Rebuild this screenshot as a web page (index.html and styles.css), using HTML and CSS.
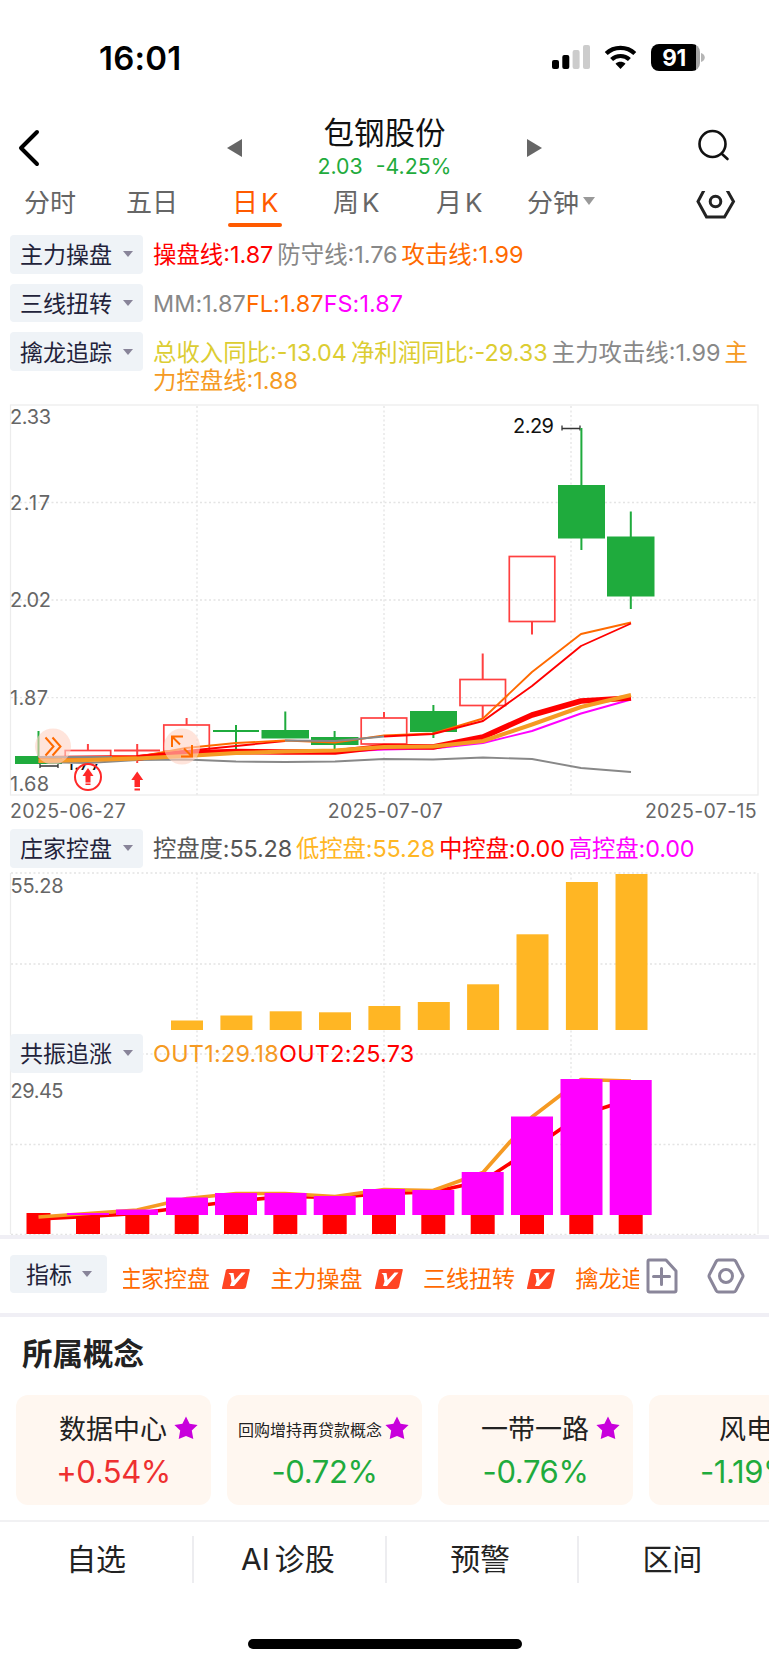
FILE: index.html
```html
<!DOCTYPE html>
<html lang="zh-CN">

<head>
    <meta charset="UTF-8">
    <meta name="viewport" content="width=device-width, initial-scale=1.0">
    <title>包钢股份</title>
    <link rel="stylesheet" href="styles.css">
</head>

<body>
    <div class="status-bar">
        <span class="status-time">16:01</span>
        <div class="status-icons">
            <svg class="icon-signal" width="38" height="24" viewBox="0 0 38 24">
                <rect x="0" y="15" width="7" height="9" rx="2" />
                <rect x="10.3" y="10" width="7" height="14" rx="2" />
                <rect class="dim" x="20.6" y="5" width="7" height="19" rx="2" />
                <rect class="dim" x="31" y="0" width="7" height="24" rx="2" />
            </svg>
            <svg class="icon-wifi" width="33" height="24" viewBox="0 0 33 24">
                <path d="M2.2 8.600C10 .9 23 .9 30.800 8.600" />
                <path d="M7.600 14.600c5-4.800 12.800-4.800 17.800 0" />
                <path class="dot" d="M11.500 18.700c3-2.600 7-2.600 10 0L16.500 24z" />
            </svg>
            <div class="battery"><span>91</span></div>
            <svg class="battery-nub" width="4" height="9" viewBox="0 0 4 9">
                <path d="M0 0c5 1.500 5 7.500 0 9z" />
            </svg>
        </div>
    </div>

    <header class="header">
        <svg class="icon-back" width="24" height="40" viewBox="0 0 24 40">
            <path d="M20 4L4 20l16 16" />
        </svg>
        <div class="stock">
            <svg width="15" height="18" viewBox="0 0 15 18"><path d="M15 0v18L0 9z" /></svg>
            <div class="stock-info">
                <h1 class="stock-name">包钢股份</h1>
                <p class="stock-price"><span>2.03</span><span>-4.25%</span></p>
            </div>
            <svg width="15" height="18" viewBox="0 0 15 18"><path d="M0 0v18l15-9z" /></svg>
        </div>
        <svg class="icon-search" width="34" height="34" viewBox="0 0 34 34">
            <circle cx="15.500" cy="15" r="13" />
            <path d="M25 25l5.500 5" />
        </svg>
    </header>

    <nav class="tabs">
        <span class="tab">分时</span>
        <span class="tab">五日</span>
        <span class="tab active">日<i>K</i></span>
        <span class="tab">周<i>K</i></span>
        <span class="tab">月<i>K</i></span>
        <span class="tab tab-more">分钟<svg width="12" height="8" viewBox="0 0 12 8"><path d="M0 0h12L6 8z" /></svg></span>
        <svg class="icon-hex" width="42" height="28" viewBox="0 0 42 28">
            <path d="M10.500-5.500h18l9 16-9 15.500h-18l-8.500-15.500z" />
            <circle cx="19.500" cy="10.500" r="5.300" />
        </svg>
    </nav>

    <section class="indicators">
        <div class="indicator">
            <button class="picker">主力操盘<i class="caret"></i></button>
            <p class="values"><span class="red">操盘线:1.87</span><span class="gray gap">防守线:1.76</span><span class="orange gap">攻击线:1.99</span></p>
        </div>
        <div class="indicator">
            <button class="picker">三线扭转<i class="caret"></i></button>
            <p class="values wide"><span class="gray">MM:1.87</span><span class="orange">FL:1.87</span><span class="magenta">FS:1.87</span></p>
        </div>
        <div class="indicator">
            <button class="picker">擒龙追踪<i class="caret"></i></button>
            <p class="values lines-two"><span class="yellow">总收入同比:-13.04</span><span class="yellow gap">净利润同比:-29.33</span><span class="gray gap">主力攻击线:1.99</span><span class="amber gap wrap">主力控盘线:1.88</span></p>
        </div>
    </section>

    <svg class="chart" width="769" height="392" viewBox="0 404 769 392">
        <g class="grid">
            <path d="M197 406v389M384 406v389M571 406v389" />
            <path d="M11 502.500h747M11 600h747M11 697.700h747" />
        </g>
        <rect class="frame" x="10.500" y="405" width="747.500" height="390" />

        <g class="label">
            <text x="10" y="423.500" textLength="41">2.33</text>
            <text x="10" y="509.500" textLength="40">2.17</text>
            <text x="10" y="607" textLength="41">2.02</text>
            <text x="10" y="704.500" textLength="38">1.87</text>
            <text x="10" y="790.500" textLength="39">1.68</text>
        </g>

        <!-- high / low marks -->
        <g class="mark">
            <text x="513" y="433" textLength="41">2.29</text>
            <path d="M562 428.500h18M562 425.500v5M580 425.500v5" />
            <text x="66" y="770" textLength="36">1.77</text>
            <path d="M40 766h18M40 764v4M58 764v4" />
        </g>
        <rect class="cover" x="64" y="751" width="48" height="13" />

        <!-- candles -->
        <g class="down">
            <path d="M38.500 731v26M236 725v24M285.300 711.500v20M334.600 731v18M433.400 705v33M581.400 428v122M630.800 511.500v97.500" />
            <rect x="15" y="756" width="47" height="8" />
            <rect x="213" y="730" width="46" height="2" />
            <rect x="261.500" y="730" width="47.500" height="8.500" />
            <rect x="311" y="737" width="47.500" height="8" />
            <rect x="410" y="711" width="47" height="21" />
            <rect x="558" y="485" width="47" height="53.500" />
            <rect x="607" y="536.500" width="47.500" height="60" />
        </g>
        <g class="up">
            <path d="M87.900 744v6M137.200 744v19M114 750.500h46M186.600 718v7M384 712v6M482.700 653.500v26M482.700 706v13M532 621.500v13" />
            <rect x="65.200" y="750.500" width="45.500" height="8" />
            <rect x="163.800" y="725" width="45.500" height="26" />
            <rect x="361.200" y="718" width="45.500" height="26" />
            <rect x="460" y="679.500" width="45.500" height="26" />
            <rect x="509.300" y="556.500" width="45.500" height="65" />
        </g>

        <g class="lines">
            <polyline stroke="#888" points="38.500,762 88,763 137,760 186,759.500 236,761.500 285,762 335,761.500 384,759 433,759.500 483,757.500 532,759 581,768 631,772" />
            <polyline stroke="#ff0000" points="38.500,757 137,756 186,751 236,746 285,741" />
            <polyline stroke="#ff6a00" points="38.500,758 137,757 186,748 236,743 285,740.500 335,742.500 384,735.500 433,733.500 483,718.500 532,672 581,634 631,622.500" />
            <polyline stroke="#888" points="38.500,757 112,757" />
            <polyline stroke="#888" points="285,740.500 335,741 384,736.500" />
            <polyline stroke="#ff0000" points="384,736.500 433,734 483,721 532,686 581,646 631,623.500" />
            <polyline stroke="#ff00ff" points="335,752 384,749.500 433,748.500 483,743 532,731 581,713.500 631,699.500" />
            <polyline class="thick" stroke="#ff0000" points="137,758 186,753 236,751.500 285,752 335,752 384,746.500 433,747 483,737 532,715 581,701 631,698" />
            <polyline class="mid" stroke="#f59a23" points="38.500,761 88,760 137,758.500 186,756 236,753 285,751.500 335,750.500 384,747 433,746.500 483,741 532,724.500 581,707 631,695" />
        </g>

        <!-- round buttons over the plot -->
        <circle class="bubble" cx="53" cy="746.500" r="18" />
        <path class="bubble-icon" d="M45.500 737.500l8 9-8 9M52.500 737.500l8 9-8 9" />
        <circle class="bubble" cx="182" cy="746.500" r="18" />
        <path class="bubble-icon" d="M172 747v-10.500h11M172 736.500l8 8M192 745v11.500h-11M192 756.500l-8-8" />

        <circle class="signal-ring" cx="88" cy="777" r="13" />
        <path class="signal-arrow" d="M88 768l5.500 8h-3v6.500h-5v-6.500h-3zM85.500 783.500h5v1.500h-5z" />
        <path class="signal-arrow" d="M137.200 771.500l6 8.500h-3.200v7h-5.500v-7h-3.200zM134.500 788.500h5.500v2h-5.500z" />
    </svg>

    <div class="dates">
        <span>2025-06-27</span>
        <span>2025-07-07</span>
        <span>2025-07-15</span>
    </div>

    <div class="indicator indicator-sub">
        <button class="picker">庄家控盘<i class="caret"></i></button>
        <p class="values tight"><span class="dark">控盘度:55.28</span><span class="gold gap">低控盘:55.28</span><span class="red gap">中控盘:0.00</span><span class="magenta gap">高控盘:0.00</span></p>
    </div>

    <section class="sub-charts">
        <svg class="chart" width="769" height="363" viewBox="0 872 769 363">
            <g class="grid">
                <path d="M197 873v361M384 873v361M571 873v361" />
                <path d="M11 873h747M11 964h747M11 1054h747M11 1144.500h747M11 1234.500h747" />
            </g>
            <path class="frame" d="M10.500 873v361M758 873v361" />
            <g class="label">
                <text x="10.500" y="892.500" textLength="53">55.28</text>
                <text x="10.500" y="1098" textLength="53">29.45</text>
            </g>

            <g class="gold-bars">
                <rect x="171" y="1020.500" width="32" height="9.500" />
                <rect x="220.400" y="1015.500" width="32" height="14.500" />
                <rect x="269.700" y="1011.300" width="32" height="18.700" />
                <rect x="319" y="1012.300" width="32" height="17.700" />
                <rect x="368.400" y="1006" width="32" height="24" />
                <rect x="417.800" y="1002" width="32" height="28" />
                <rect x="467.100" y="984.300" width="32" height="45.700" />
                <rect x="516.500" y="934.300" width="32" height="95.700" />
                <rect x="565.900" y="882" width="32" height="148" />
                <rect x="615.500" y="874" width="32" height="156" />
            </g>

            <g class="red-bars">
                <rect x="26.500" y="1213" width="24" height="21" />
                <rect x="76" y="1217" width="24" height="17" />
                <rect x="125.300" y="1215" width="24" height="19" />
                <rect x="174.700" y="1215" width="24" height="19" />
                <rect x="224" y="1215" width="24" height="19" />
                <rect x="273.300" y="1215" width="24" height="19" />
                <rect x="322.700" y="1215" width="24" height="19" />
                <rect x="372" y="1215" width="24" height="19" />
                <rect x="421.300" y="1215" width="24" height="19" />
                <rect x="470.700" y="1215" width="24" height="19" />
                <rect x="520" y="1215" width="24" height="19" />
                <rect x="569.300" y="1215" width="24" height="19" />
                <rect x="618.700" y="1215" width="24" height="19" />
            </g>
            <g class="lines out">
                <polyline stroke="#ff0000" points="38.500,1219 88,1216.500 137,1213.500 187,1207 236,1201 285,1196.500 335,1197.500 384,1193.500 433,1192 483,1181 532,1149 581,1115 631,1099" />
                <polyline stroke="#f59a23" points="38.500,1217 88,1213.500 137,1210 187,1198.500 236,1193.500 285,1193.500 335,1196.500 384,1189.500 433,1190.500 483,1172.500 532,1117 581,1079.500 631,1081" />
            </g>
            <g class="magenta-bars">
                <rect x="67" y="1213" width="42" height="2" />
                <rect x="116" y="1209.500" width="42" height="5.500" />
                <rect x="166" y="1197.500" width="42" height="17.500" />
                <rect x="215" y="1193" width="42" height="22" />
                <rect x="264.500" y="1193" width="42" height="22" />
                <rect x="313.700" y="1196" width="42" height="19" />
                <rect x="363" y="1189" width="42" height="26" />
                <rect x="412.300" y="1190" width="42" height="25" />
                <rect x="461.700" y="1172" width="42" height="43" />
                <rect x="511" y="1116.500" width="42" height="98.500" />
                <rect x="560.500" y="1079" width="42" height="136" />
                <rect x="609.700" y="1080" width="42" height="135" />
            </g>
        </svg>
        <div class="indicator indicator-over">
            <button class="picker">共振追涨<i class="caret"></i></button>
            <p class="values wider"><span class="amber">OUT1:29.18</span><span class="red">OUT2:25.73</span></p>
        </div>
    </section>

    <section class="toolbar">
        <button class="picker picker-small">指标<i class="caret"></i></button>
        <div class="quick-list">
            <span class="quick">庄家控盘<svg class="icon-v" width="28" height="20" viewBox="0 0 28 20"><path class="bg" d="M5.500 0H27q1 0 .8 1L24 18q-.5 2-3 2H1Q-.2 20 0 19L3.800 1.500Q4.200 0 5.500 0z" /><path class="v" d="M6.500 4h5l1.200 7L19.500 3.500h4L12 17H8l1.500-4.500L8.500 6z" /></svg></span>
            <span class="quick">主力操盘<svg class="icon-v" width="28" height="20" viewBox="0 0 28 20"><path class="bg" d="M5.500 0H27q1 0 .8 1L24 18q-.5 2-3 2H1Q-.2 20 0 19L3.800 1.500Q4.200 0 5.500 0z" /><path class="v" d="M6.500 4h5l1.200 7L19.500 3.500h4L12 17H8l1.500-4.500L8.500 6z" /></svg></span>
            <span class="quick">三线扭转<svg class="icon-v" width="28" height="20" viewBox="0 0 28 20"><path class="bg" d="M5.500 0H27q1 0 .8 1L24 18q-.5 2-3 2H1Q-.2 20 0 19L3.800 1.500Q4.200 0 5.500 0z" /><path class="v" d="M6.500 4h5l1.200 7L19.500 3.500h4L12 17H8l1.500-4.500L8.500 6z" /></svg></span>
            <span class="quick">擒龙追踪</span>
        </div>
        <svg class="icon-tool icon-add" width="32" height="36" viewBox="0 0 32 36">
            <path d="M3 2h17l10 11v19.500q0 1.500-1.500 1.500H3.500Q2 34 2 32.500v-29Q2 2 3 2z" />
            <path d="M15.500 10.500v16M7.500 18.500h16" />
        </svg>
        <svg class="icon-tool" width="38" height="36" viewBox="0 0 38 36">
            <path d="M11.500 2h15q1.500 0 2.200 1.200l7 13.600q.6 1.200 0 2.400l-7 13.600Q28 34 26.500 34h-15q-1.500 0-2.200-1.200l-7-13.600q-.6-1.200 0-2.400l7-13.600Q10 2 11.500 2z" />
            <circle cx="19" cy="18" r="6.500" />
        </svg>
    </section>

    <section class="concepts">
        <h2 class="concepts-title">所属概念</h2>
        <div class="cards">
            <div class="card">
                <div class="card-name">数据中心<svg class="star" width="24" height="24" viewBox="0 0 24 24"><path d="M12 .5l3.600 7.300 8 1.100-5.800 5.600 1.500 8.500L12 20l-7.300 3 1.500-8.500L.4 8.900l8-1.100z" /></svg></div>
                <div class="card-rate rise">+0.54%</div>
            </div>
            <div class="card">
                <div class="card-name long">回购增持再贷款概念<svg class="star" width="24" height="24" viewBox="0 0 24 24"><path d="M12 .5l3.600 7.300 8 1.100-5.800 5.600 1.500 8.500L12 20l-7.300 3 1.500-8.500L.4 8.900l8-1.100z" /></svg></div>
                <div class="card-rate fall">-0.72%</div>
            </div>
            <div class="card">
                <div class="card-name">一带一路<svg class="star" width="24" height="24" viewBox="0 0 24 24"><path d="M12 .5l3.600 7.300 8 1.100-5.800 5.600 1.500 8.500L12 20l-7.300 3 1.500-8.500L.4 8.900l8-1.100z" /></svg></div>
                <div class="card-rate fall">-0.76%</div>
            </div>
            <div class="card">
                <div class="card-name cut">风电</div>
                <div class="card-rate fall">-1.19%</div>
            </div>
        </div>
    </section>

    <nav class="bottom-nav">
        <a>自选</a>
        <a><span class="latin">AI</span>诊股</a>
        <a>预警</a>
        <a>区间</a>
    </nav>
    <div class="home-bar"></div>
</body>

</html>
```
FILE: styles.css
```css
* {
    box-sizing: border-box;
}

body {
    margin: 0;
    width: 769px;
    height: 1665px;
    overflow: hidden;
    background: #fff;
    color: #222;
    font-family: Inter, "Noto Sans CJK SC", sans-serif;
}

h1,
h2,
p {
    margin: 0;
    font-weight: 400;
}

i {
    font-style: normal;
}

svg {
    display: block;
    flex: none;
}

/* status bar */
.status-bar {
    display: flex;
    justify-content: space-between;
    align-items: center;
    height: 114px;
    padding: 0 64px 0 99px;
}

.status-time {
    padding-top: 2px;
    font-size: 33px;
    font-weight: 600;
    color: #000;
    letter-spacing: 0.2px;
}

.status-icons {
    display: flex;
    align-items: center;
}

.icon-signal {
    margin-right: -1px;
}

.icon-wifi {
    margin: 0 14px 0 15px;
    fill: none;
    stroke: #000;
    stroke-width: 4.2;
}

.icon-wifi .dot {
    fill: #000;
    stroke: none;
}

.icon-signal .dim {
    fill: #ccc;
}

.battery {
    width: 49px;
    height: 27px;
    padding-right: 3px;
    border-radius: 8px;
    background: linear-gradient(90deg, #000 92%, #a5a5a5 92%);
    color: #fff;
    font-size: 22.5px;
    font-weight: 700;
    line-height: 27px;
    text-align: center;
    letter-spacing: -0.5px;
}

.battery-nub {
    margin-left: 1px;
    fill: #b5b5b5;
}

/* header */
.header {
    display: flex;
    justify-content: space-between;
    align-items: center;
    height: 68px;
    padding: 0 38px 0 17px;
}

.icon-back {
    fill: none;
    stroke: #000;
    stroke-width: 4;
    stroke-linecap: round;
    stroke-linejoin: round;
}

.stock {
    display: flex;
    align-items: center;
    justify-content: space-between;
    width: 315px;
    margin-left: 31px;
    fill: #666;
}

.stock-info {
    margin-top: -2px;
    text-align: center;
}

.stock-name {
    font-size: 30.5px;
    line-height: 38px;
    color: #111;
}

.stock-price {
    display: flex;
    justify-content: center;
    gap: 13px;
    font-size: 21.3px;
    line-height: 28px;
    color: #1fab3d;
}

.icon-search {
    margin-bottom: 4px;
    fill: none;
    stroke: #111;
    stroke-width: 2.6;
    stroke-linecap: round;
}

/* period tabs, the row is scrolled a little under the header */
.tabs {
    display: flex;
    height: 45px;
    margin-top: 9px;
    padding-left: 24px;
    overflow: hidden;
}

.tab {
    position: relative;
    flex: none;
    width: 103px;
    height: 36px;
    font-size: 26px;
    line-height: 23px;
    color: #666;
}

.tab:nth-child(2) {
    margin-left: -1px;
    margin-right: 1px;
}

.tab:nth-child(3) {
    padding-left: 2px;
}

.tab i {
    margin-left: 3px;
}

.tab.active {
    color: #ff5a00;
}

.tab.active::after {
    content: "";
    position: absolute;
    left: -2px;
    bottom: 0;
    width: 54px;
    height: 4px;
    border-radius: 2px;
    background: #ff5a00;
}

.tab-more {
    display: flex;
    gap: 4px;
    margin-left: -12px;
    margin-right: auto;
}

.tab-more svg {
    margin-top: 6px;
    fill: #999;
}

.icon-hex {
    margin-right: 31px;
    fill: none;
    stroke: #222;
    stroke-width: 3;
}

/* indicator rows */
.indicators {
    display: flex;
    flex-direction: column;
    gap: 10px;
    height: 169px;
    margin-top: -1px;
}

.indicator {
    display: flex;
    align-items: flex-start;
    gap: 10px;
    padding-left: 10px;
}

.picker {
    display: flex;
    flex: none;
    align-items: center;
    justify-content: space-between;
    width: 133px;
    height: 38.7px;
    padding: 0 10px 2px 10px;
    border: none;
    border-radius: 4px;
    background: #eff3f7;
    color: #22223a;
    font-family: inherit;
    font-size: 23px;
}

.caret {
    margin-top: 2px;
    border: 5.5px solid transparent;
    border-top: 6px solid #888499;
    border-bottom: 0;
}

.values {
    width: 600px;
    padding-top: 6px;
    font-size: 23.4px;
    line-height: 28px;
}

.values.wide {
    letter-spacing: 0.07px;
}

.values.wider {
    letter-spacing: 0.25px;
}

.values.tight {
    letter-spacing: -0.13px;
}

.values.lines-two {
    padding-top: 6.5px;
}

.values span {
    white-space: nowrap;
}

.values .gap {
    margin-left: 4px;
}

.values .wrap {
    white-space: normal;
}

.red {
    color: #ff0000;
}

.gray {
    color: #888;
}

.dark {
    color: #555;
}

.orange {
    color: #ff6a00;
}

.amber {
    color: #f59a23;
}

.gold {
    color: #ffb624;
}

.yellow {
    color: #dccd32;
}

.magenta {
    color: #ff00ff;
}

/* charts */
.chart text {
    font-size: 20px;
}

.grid {
    fill: none;
    stroke: #e4e4e4;
    stroke-width: 1.3;
    stroke-dasharray: 2 2.5;
}

.frame {
    fill: none;
    stroke: #ececec;
    stroke-width: 1.2;
}

.label {
    fill: #666;
}

.mark {
    fill: #111;
}

.mark path {
    stroke: #333;
    stroke-width: 1.3;
}

.cover {
    fill: #fff;
}

.down {
    fill: #1fab3d;
}

.down path {
    stroke: #1fab3d;
    stroke-width: 2;
}

.up {
    fill: none;
    stroke: #ff4040;
    stroke-width: 1.7;
}

.up path {
    stroke-width: 2;
}

.lines {
    fill: none;
    stroke-width: 1.9;
    stroke-linejoin: round;
}

.lines .thick {
    stroke-width: 5.5;
}

.lines .mid {
    stroke-width: 4;
}

.lines.out {
    stroke-width: 3.7;
}

.bubble {
    fill: #ffd2c3;
    fill-opacity: 0.6;
}

.bubble-icon {
    fill: none;
    stroke: #ff6a00;
    stroke-width: 2;
}

.signal-ring {
    fill: none;
    stroke: #ff2828;
    stroke-width: 2;
}

.signal-arrow {
    fill: #ff2828;
}

.gold-bars {
    fill: #ffb624;
}

.red-bars {
    fill: #ff0000;
}

.magenta-bars {
    fill: #ff00ff;
}

.dates {
    display: flex;
    justify-content: space-between;
    height: 33px;
    padding: 2px 12px 0 10px;
    font-size: 19.5px;
    line-height: 26px;
    letter-spacing: 0.35px;
    color: #666;
}

.indicator-sub {
    height: 43px;
}

.sub-charts {
    position: relative;
    height: 363px;
}

.indicator-over {
    position: absolute;
    left: 0;
    top: 162px;
}

/* toolbar */
.toolbar {
    display: flex;
    height: 82px;
    padding: 15.5px 0 0 10px;
    border: solid #f0eff5;
    border-width: 4px 0;
}

.picker-small {
    width: 97px;
    padding: 0 15px 2px 16px;
}

.quick-list {
    display: flex;
    width: 516px;
    height: 40px;
    margin: 4px 0 0 16px;
    overflow: hidden;
}

.quick {
    display: flex;
    flex: none;
    align-items: center;
    gap: 12px;
    width: 152.5px;
    margin-left: -5px;
    margin-right: 5px;
    font-size: 23px;
    line-height: 40px;
    color: #ff6a00;
}

.icon-v .bg {
    fill: #ff4423;
}

.icon-v .v {
    fill: #fff;
}

.icon-tool {
    margin: 3px 0 0 29px;
    fill: none;
    stroke: #8a869a;
    stroke-width: 3;
    stroke-linecap: round;
    stroke-linejoin: round;
}

.icon-add {
    margin-left: 7px;
}

/* concepts */
.concepts {
    height: 203px;
    overflow: hidden;
}

.concepts-title {
    padding: 16px 0 0 22px;
    font-size: 30.5px;
    font-weight: 700;
    line-height: 42px;
}

.cards {
    display: flex;
    gap: 16px;
    margin-top: 20px;
    padding-left: 16px;
}

.card {
    flex: none;
    width: 195px;
    height: 110px;
    padding-top: 14px;
    border-radius: 12px;
    background: #fff7f0;
}

.card-name {
    display: flex;
    align-items: center;
    justify-content: flex-end;
    gap: 7px;
    height: 42px;
    padding-right: 13px;
    font-size: 27px;
    line-height: 42px;
}

.card-name.long {
    gap: 3px;
    font-size: 16px;
}

.card-name.cut {
    justify-content: flex-start;
    padding-left: 70px;
}

.star {
    margin-bottom: 5px;
    fill: #c800dc;
}

.card-rate {
    font-size: 31px;
    line-height: 42px;
    letter-spacing: -0.4px;
    text-align: center;
}

.rise {
    color: #ee3030;
}

.fall {
    color: #1fab3d;
}

/* bottom navigation */
.bottom-nav {
    display: flex;
    height: 119px;
    padding-top: 14px;
    border-top: 2px solid #f1f1f3;
}

.bottom-nav a {
    width: 25%;
    height: 47px;
    font-size: 30px;
    line-height: 47px;
    text-align: center;
}

.bottom-nav a + a {
    padding-right: 3px;
    border-left: 2px solid #ededf0;
}

.latin {
    margin-right: 5px;
}

.home-bar {
    width: 274px;
    height: 10px;
    margin: 0 auto;
    border-radius: 5px;
    background: #000;
}
```
